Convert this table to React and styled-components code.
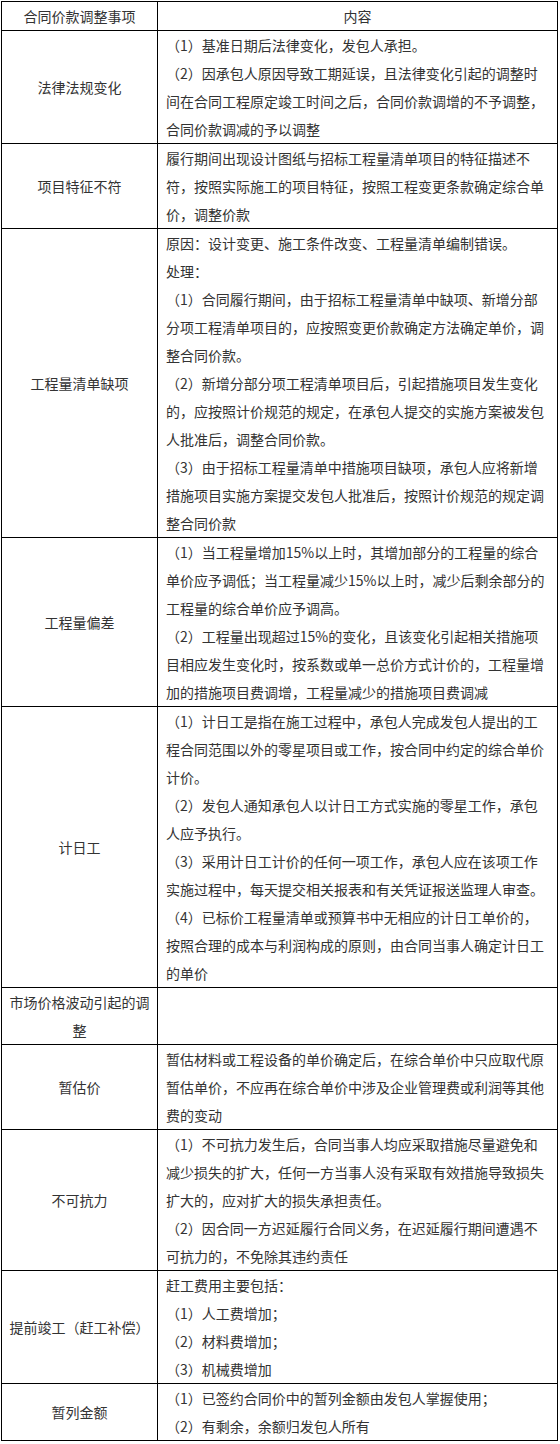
import React from "react";
import styled, { createGlobalStyle } from "styled-components";

const GlobalStyle = createGlobalStyle`
  html, body {
    margin: 0;
    padding: 0;
    background: #ffffff;
  }
  body {
    font-family: "Noto Sans CJK SC", "Microsoft YaHei", "Noto Sans", sans-serif;
  }
`;

const Page = styled.div`
  padding: 1px 0 0 1px;
  width: 560px;
  box-sizing: border-box;
`;

const Table = styled.table`
  width: 556px;
  border-collapse: collapse;
  table-layout: fixed;
  font-family: "Noto Sans CJK SC", "Microsoft YaHei", sans-serif;
  font-size: 14px;
  line-height: 28px;
  color: #333333;
`;

const Col = styled.col`
  width: ${(p) => p.$w}px;
`;

const HeadCell = styled.th`
  border: 1px solid #000000;
  padding: 0 6px;
  font-weight: normal;
  text-align: center;
  vertical-align: middle;
  white-space: nowrap;
`;

const NameCell = styled.td`
  border: 1px solid #000000;
  padding: 0 6px;
  text-align: center;
  vertical-align: middle;
  white-space: nowrap;
`;

const ContentCell = styled.td`
  border: 1px solid #000000;
  padding: 0 8px;
  text-align: left;
  vertical-align: top;
  white-space: nowrap;
`;

const Para = styled.p`
  margin: 0;
  padding: 0;
`;

const rows = [
  {
    name: ["法律法规变化"],
    paras: [
      ["（1）基准日期后法律变化，发包人承担。"],
      [
        "（2）因承包人原因导致工期延误，且法律变化引起的调整时",
        "间在合同工程原定竣工时间之后，合同价款调增的不予调整，",
        "合同价款调减的予以调整",
      ],
    ],
  },
  {
    name: ["项目特征不符"],
    paras: [
      [
        "履行期间出现设计图纸与招标工程量清单项目的特征描述不",
        "符，按照实际施工的项目特征，按照工程变更条款确定综合单",
        "价，调整价款",
      ],
    ],
  },
  {
    name: ["工程量清单缺项"],
    paras: [
      ["原因：设计变更、施工条件改变、工程量清单编制错误。"],
      ["处理："],
      [
        "（1）合同履行期间，由于招标工程量清单中缺项、新增分部",
        "分项工程清单项目的，应按照变更价款确定方法确定单价，调",
        "整合同价款。",
      ],
      [
        "（2）新增分部分项工程清单项目后，引起措施项目发生变化",
        "的，应按照计价规范的规定，在承包人提交的实施方案被发包",
        "人批准后，调整合同价款。",
      ],
      [
        "（3）由于招标工程量清单中措施项目缺项，承包人应将新增",
        "措施项目实施方案提交发包人批准后，按照计价规范的规定调",
        "整合同价款",
      ],
    ],
  },
  {
    name: ["工程量偏差"],
    paras: [
      [
        "（1）当工程量增加15%以上时，其增加部分的工程量的综合",
        "单价应予调低；当工程量减少15%以上时，减少后剩余部分的",
        "工程量的综合单价应予调高。",
      ],
      [
        "（2）工程量出现超过15%的变化，且该变化引起相关措施项",
        "目相应发生变化时，按系数或单一总价方式计价的，工程量增",
        "加的措施项目费调增，工程量减少的措施项目费调减",
      ],
    ],
  },
  {
    name: ["计日工"],
    paras: [
      [
        "（1）计日工是指在施工过程中，承包人完成发包人提出的工",
        "程合同范围以外的零星项目或工作，按合同中约定的综合单价",
        "计价。",
      ],
      ["（2）发包人通知承包人以计日工方式实施的零星工作，承包", "人应予执行。"],
      [
        "（3）采用计日工计价的任何一项工作，承包人应在该项工作",
        "实施过程中，每天提交相关报表和有关凭证报送监理人审查。",
      ],
      [
        "（4）已标价工程量清单或预算书中无相应的计日工单价的，",
        "按照合理的成本与利润构成的原则，由合同当事人确定计日工",
        "的单价",
      ],
    ],
  },
  {
    name: ["市场价格波动引起的调", "整"],
    paras: [],
  },
  {
    name: ["暂估价"],
    paras: [
      [
        "暂估材料或工程设备的单价确定后，在综合单价中只应取代原",
        "暂估单价，不应再在综合单价中涉及企业管理费或利润等其他",
        "费的变动",
      ],
    ],
  },
  {
    name: ["不可抗力"],
    paras: [
      [
        "（1）不可抗力发生后，合同当事人均应采取措施尽量避免和",
        "减少损失的扩大，任何一方当事人没有采取有效措施导致损失",
        "扩大的，应对扩大的损失承担责任。",
      ],
      ["（2）因合同一方迟延履行合同义务，在迟延履行期间遭遇不", "可抗力的，不免除其违约责任"],
    ],
  },
  {
    name: ["提前竣工（赶工补偿）"],
    paras: [
      ["赶工费用主要包括："],
      ["（1）人工费增加；"],
      ["（2）材料费增加；"],
      ["（3）机械费增加"],
    ],
  },
  {
    name: ["暂列金额"],
    paras: [["（1）已签约合同价中的暂列金额由发包人掌握使用；"], ["（2）有剩余，余额归发包人所有"]],
  },
];

const Lines = ({ lines }) =>
  lines.map((l, i) => (
    <React.Fragment key={i}>
      {i > 0 && <br />}
      {l}
    </React.Fragment>
  ));

export default function App() {
  return (
    <Page>
      <GlobalStyle />
      <Table>
        <colgroup>
          <Col $w={156} />
          <Col $w={400} />
        </colgroup>
        <thead>
          <tr>
            <HeadCell>合同价款调整事项</HeadCell>
            <HeadCell>内容</HeadCell>
          </tr>
        </thead>
        <tbody>
          {rows.map((r, i) => (
            <tr key={i}>
              <NameCell>
                <Lines lines={r.name} />
              </NameCell>
              <ContentCell>
                {r.paras.map((p, j) => (
                  <Para key={j}>
                    <Lines lines={p} />
                  </Para>
                ))}
              </ContentCell>
            </tr>
          ))}
        </tbody>
      </Table>
    </Page>
  );
}
